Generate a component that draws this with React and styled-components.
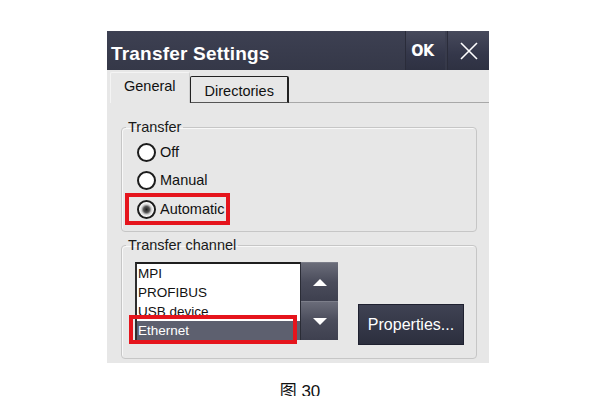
import React from 'react';
import styled, { createGlobalStyle } from 'styled-components';

const GlobalStyle = createGlobalStyle`
  html, body {
    margin: 0;
    padding: 0;
    background: #ffffff;
  }
  body {
    font-family: 'Liberation Sans', Arial, sans-serif;
  }
`;

const channels = ['MPI', 'PROFIBUS', 'USB device', 'Ethernet'];
const modes = ['Off', 'Manual', 'Automatic'];

const App = () => {
  return (
    <Page>
      <GlobalStyle />
      <Dialog>
        <TitleBar>
          <Title>Transfer Settings</Title>
          <TitleButtons>
            <TitleBtn width={40}>
              <OkText>OK</OkText>
            </TitleBtn>
            <TitleBtn width={42}>
              <svg width="20" height="20" viewBox="0 0 20 20">
                <path d="M2 2 L18 18 M18 2 L2 18" stroke="#fff" strokeWidth="1.6" />
              </svg>
            </TitleBtn>
          </TitleButtons>
        </TitleBar>

        <TabRow>
          <Tab active>General</Tab>
          <Tab>Directories</Tab>
          <TabFill />
        </TabRow>

        <Body>
          <Group>
            <Legend>Transfer</Legend>
            <RadioList>
              {modes.map(mode => (
                <RadioRow key={mode} highlighted={mode === 'Automatic'}>
                  <Radio checked={mode === 'Automatic'} />
                  <RadioLabel>{mode}</RadioLabel>
                </RadioRow>
              ))}
            </RadioList>
          </Group>

          <Group channel>
            <Legend>Transfer channel</Legend>
            <ChannelRow>
              <ListWrap>
                <ListBox>
                  {channels.map(ch => (
                    <ListItem key={ch} selected={ch === 'Ethernet'}>
                      {ch}
                    </ListItem>
                  ))}
                </ListBox>
                <Marker />
              </ListWrap>
              <ScrollCol>
                <ScrollBtn>
                  <Arrow />
                </ScrollBtn>
                <ScrollBtn>
                  <Arrow down />
                </ScrollBtn>
              </ScrollCol>
              <PropsBtn>Properties...</PropsBtn>
            </ChannelRow>
          </Group>
        </Body>
      </Dialog>
      <Caption>图 30</Caption>
    </Page>
  );
};
export default App;

const Page = styled.div`
  width: 607px;
  height: 396px;
  overflow: hidden;
  padding: 31px 0 0 107px;
  box-sizing: border-box;
`;

const Dialog = styled.div`
  width: 382px;
  height: 332px;
  background-color: #e7e7e7;
  display: flex;
  flex-direction: column;
`;

const TitleBar = styled.div`
  height: 39px;
  background: linear-gradient(#3d4052, #353848);
  display: flex;
  align-items: center;
  justify-content: space-between;
`;

const Title = styled.div`
  color: #ffffff;
  font-weight: 700;
  font-size: 19px;
  letter-spacing: 0.2px;
  padding-left: 4px;
  padding-top: 6px;
`;

const TitleButtons = styled.div`
  display: flex;
  height: 100%;
  gap: 2px;
`;

const TitleBtn = styled.div`
  width: ${props => props.width}px;
  height: 100%;
  background: linear-gradient(#474a5c, #34374a 60%, #2e3142);
  border-left: 1px solid #2a2c3a;
  box-sizing: border-box;
  display: flex;
  align-items: center;
  justify-content: center;
`;

const OkText = styled.span`
  color: #ffffff;
  font-family: 'DejaVu Sans Condensed', 'DejaVu Sans', sans-serif;
  font-weight: 700;
  font-size: 16px;
  letter-spacing: -0.5px;
  padding-right: 6px;
`;

const TabRow = styled.div`
  height: 33px;
  display: flex;
  align-items: flex-end;
  padding-left: 3px;
`;

const Tab = styled.div`
  height: ${props => (props.active ? '31px' : '27px')};
  box-sizing: border-box;
  font-size: 14.5px;
  color: #111;
  display: flex;
  align-items: center;
  padding: ${props => (props.active ? '0 13px 4px 13px' : '2px 13px 0 14px')};
  border: ${props => (props.active ? '1px solid #f4f4f4' : '1px solid #222')};
  border-bottom: ${props => (props.active ? 'none' : '1px solid #555')};
  border-right: ${props => (props.active ? '1px solid #cfcfcf' : '2px solid #222')};
  border-radius: 2px 2px 0 0;
`;

const TabFill = styled.div`
  flex: 1;
  border-bottom: 1px solid #a8a8a8;
`;

const Body = styled.div`
  padding: 16px 12px 0 14px;
  display: flex;
  flex-direction: column;
  gap: 5px;
`;

const Group = styled.fieldset`
  margin: 0;
  border: 1px solid #c6c6c6;
  border-radius: 4px;
  padding: ${props => (props.channel ? '9px 0 13px 0' : '3px 0 6px 0')};
  box-shadow: 1px 1px 0 #f8f8f8 inset;
`;

const Legend = styled.legend`
  font-size: 14.5px;
  line-height: 16px;
  color: #1a1a1a;
  padding: 0 2px;
  margin-left: 4px;
`;

const RadioList = styled.div`
  display: flex;
  flex-direction: column;
  padding-left: 3px;
`;

const RadioRow = styled.div`
  display: flex;
  align-items: center;
  width: fit-content;
  height: ${props => (props.highlighted ? '32px' : '28px')};
  margin: ${props => (props.highlighted ? '-1px 0 0 0' : '0')};
  box-sizing: border-box;
  padding: 0 2px 0 8px;
  border: 4px solid ${props => (props.highlighted ? '#e5141c' : 'transparent')};
  gap: 4px;
`;

const Radio = styled.span`
  width: 19px;
  height: 19px;
  box-sizing: border-box;
  border-radius: 50%;
  border: 2px solid #1c1c1c;
  background: ${props =>
    props.checked
      ? 'radial-gradient(circle at 50% 50%, #1e1e1e 0, #555 3px, #cfcfcf 5px, #fff 7px)'
      : '#ffffff'};
`;

const RadioLabel = styled.span`
  font-size: 14.5px;
  color: #111;
`;

const ChannelRow = styled.div`
  display: flex;
  align-items: flex-start;
  padding-left: 13px;
`;

const ListWrap = styled.div`
  position: relative;
`;

const ListBox = styled.div`
  width: 165px;
  height: 78px;
  box-sizing: border-box;
  background: #ffffff;
  border-top: 2px solid #1e1e1e;
  border-left: 2px solid #2e2e2e;
  display: flex;
  flex-direction: column;
`;

const ListItem = styled.div`
  height: 19px;
  line-height: 19px;
  font-size: 13.5px;
  padding-left: 1px;
  color: ${props => (props.selected ? '#ffffff' : '#111')};
  background: ${props => (props.selected ? '#5d606f' : 'transparent')};
`;

const Marker = styled.div`
  position: absolute;
  left: -6px;
  top: 53px;
  width: 168px;
  height: 29px;
  box-sizing: border-box;
  border: 4px solid #e5141c;
`;

const ScrollCol = styled.div`
  display: flex;
  flex-direction: column;
  border-left: 1px solid #2a2c36;
`;

const ScrollBtn = styled.div`
  width: 37px;
  height: 39px;
  background: linear-gradient(#6a6c79, #4a4c5b 50%, #3e404f);
  border-top: 1px solid #7c7e8a;
  box-sizing: border-box;
  display: flex;
  align-items: center;
  justify-content: center;
`;

const Arrow = styled.span`
  width: 0;
  height: 0;
  border-left: 7px solid transparent;
  border-right: 7px solid transparent;
  border-bottom: ${props => (props.down ? 'none' : '7px solid #ffffff')};
  border-top: ${props => (props.down ? '7px solid #ffffff' : 'none')};
`;

const PropsBtn = styled.div`
  margin: 42px 0 0 20px;
  width: 106px;
  height: 41px;
  box-sizing: border-box;
  background: linear-gradient(#3f4253, #2c2f3e);
  border: 1px solid #1f2130;
  color: #ffffff;
  font-size: 16px;
  display: flex;
  align-items: center;
  justify-content: center;
`;

const Caption = styled.div`
  margin-top: 19px;
  width: 386px;
  text-align: center;
  font-family: 'Liberation Sans', 'Noto Sans CJK SC', sans-serif;
  font-size: 17px;
  line-height: 20px;
  color: #111;
`;
